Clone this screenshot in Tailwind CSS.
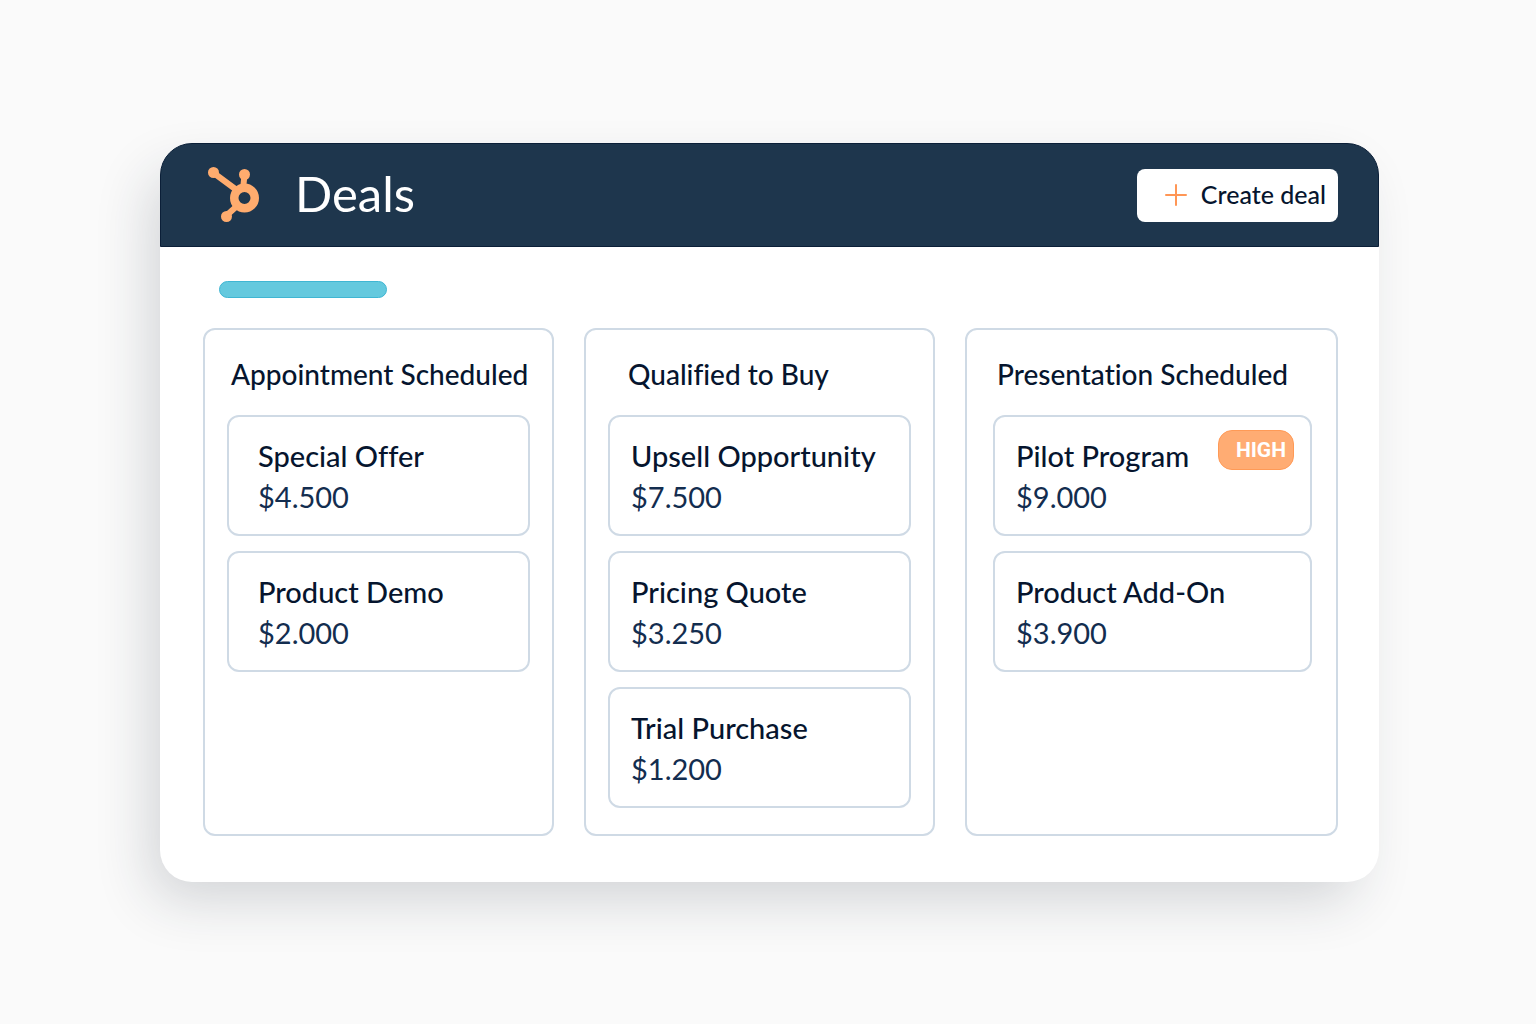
<!DOCTYPE html>
<html lang="en">
<head>
  <meta charset="UTF-8">
  <meta name="viewport" content="width=device-width, initial-scale=1.0">
  <title>Deals</title>
  <script src="https://cdn.jsdelivr.net/npm/@tailwindcss/browser@4"></script>
</head>
<body class="min-h-screen bg-[#fafafa] font-['Lato','Open_Sans',sans-serif] text-[#06152e] [font-variant-ligatures:none]">
  <main class="pt-[143px] pb-[142px] pl-[160px] pr-[157px]">
    <div class="rounded-[32px] bg-white shadow-[-16px_24px_56px_-8px_rgba(30,40,60,0.19)]">

      <!-- Header -->
      <header class="flex items-center justify-between rounded-t-[32px] border border-[#0b1f38] bg-[#1e364d] h-[104px] pl-[46px] pr-10">
        <div class="flex items-center gap-[34px]">
          <svg class="h-[58px] w-[54px]" viewBox="0 0 54 58" fill="none" stroke="#ffac6e" aria-hidden="true">
            <path d="M6 6.500L31 25M37.500 9L36 23M20 49L30 40" stroke-width="6"/>
            <circle cx="37.500" cy="32" r="10.250" stroke-width="8.500"/>
            <g fill="#ffac6e" stroke="none">
              <circle cx="6.500" cy="6.500" r="5.500"/>
              <circle cx="37.500" cy="8.500" r="5.500"/>
              <circle cx="19.500" cy="50.500" r="5.500"/>
            </g>
          </svg>
          <h1 class="text-[49px] leading-[56px] pb-1 text-white">Deals</h1>
        </div>
        <button type="button" class="flex h-[53px] items-center gap-[14px] rounded-lg bg-white pl-7 pr-3 text-[25px] font-medium">
          <svg class="size-[22px]" viewBox="0 0 22 22" stroke="#ff9655" stroke-width="2" stroke-linecap="round" aria-hidden="true">
            <path d="M11 1V21M1 11H21"/>
          </svg>
          Create deal
        </button>
      </header>

      <!-- Board -->
      <div class="pt-[34px] pb-[46px] pl-[43px] pr-[41px]">
        <div class="ml-4 h-[17px] w-[168px] rounded-full border border-[#3fb6d3] bg-[#64c9de]"></div>

        <div class="mt-[30px] grid grid-cols-[351fr_351fr_373fr] gap-[30px] text-[29px] leading-[41px]">
          <section class="rounded-xl border-2 border-[#cfdae5] px-[22px] pt-6 pb-[26px]">
            <h2 class="mb-5 ml-1 whitespace-nowrap text-[28px] leading-[41px] font-medium">Appointment Scheduled</h2>
            <div class="flex flex-col gap-[15px]">
              <article class="rounded-xl border-2 border-[#cfdae5] pt-[18px] pb-[17px] pl-[29px]">
                <h3 class="font-medium">Special Offer</h3>
                <p class="text-[#132d4f]">$4.500</p>
              </article>
              <article class="rounded-xl border-2 border-[#cfdae5] pt-[18px] pb-[17px] pl-[29px]">
                <h3 class="font-medium">Product Demo</h3>
                <p class="text-[#132d4f]">$2.000</p>
              </article>
            </div>
          </section>

          <section class="rounded-xl border-2 border-[#cfdae5] px-[22px] pt-6 pb-[26px]">
            <h2 class="mb-5 ml-5 whitespace-nowrap text-[28px] leading-[41px] font-medium">Qualified to Buy</h2>
            <div class="flex flex-col gap-[15px]">
              <article class="rounded-xl border-2 border-[#cfdae5] pt-[18px] pb-[17px] pl-[21px]">
                <h3 class="font-medium">Upsell Opportunity</h3>
                <p class="text-[#132d4f]">$7.500</p>
              </article>
              <article class="rounded-xl border-2 border-[#cfdae5] pt-[18px] pb-[17px] pl-[21px]">
                <h3 class="font-medium">Pricing Quote</h3>
                <p class="text-[#132d4f]">$3.250</p>
              </article>
              <article class="rounded-xl border-2 border-[#cfdae5] pt-[18px] pb-[17px] pl-[21px]">
                <h3 class="font-medium">Trial Purchase</h3>
                <p class="text-[#132d4f]">$1.200</p>
              </article>
            </div>
          </section>

          <section class="rounded-xl border-2 border-[#cfdae5] pt-6 pb-[26px] pl-[26px] pr-6">
            <h2 class="mb-5 ml-1 whitespace-nowrap text-[28px] leading-[41px] font-medium">Presentation Scheduled</h2>
            <div class="flex flex-col gap-[15px]">
              <article class="relative rounded-xl border-2 border-[#cfdae5] pt-[18px] pb-[17px] pl-[21px]">
                <h3 class="font-medium">Pilot Program</h3>
                <p class="text-[#132d4f]">$9.000</p>
                <span class="absolute top-[13px] right-4 flex h-10 items-center rounded-[14px] border border-[#ff9a56] bg-[#ffac73] pl-[17px] pr-[7px] font-['Roboto',sans-serif] text-[21px] font-bold text-white">HIGH</span>
              </article>
              <article class="rounded-xl border-2 border-[#cfdae5] pt-[18px] pb-[17px] pl-[21px]">
                <h3 class="font-medium">Product Add-On</h3>
                <p class="text-[#132d4f]">$3.900</p>
              </article>
            </div>
          </section>
        </div>
      </div>
    </div>
  </main>
</body>
</html>
